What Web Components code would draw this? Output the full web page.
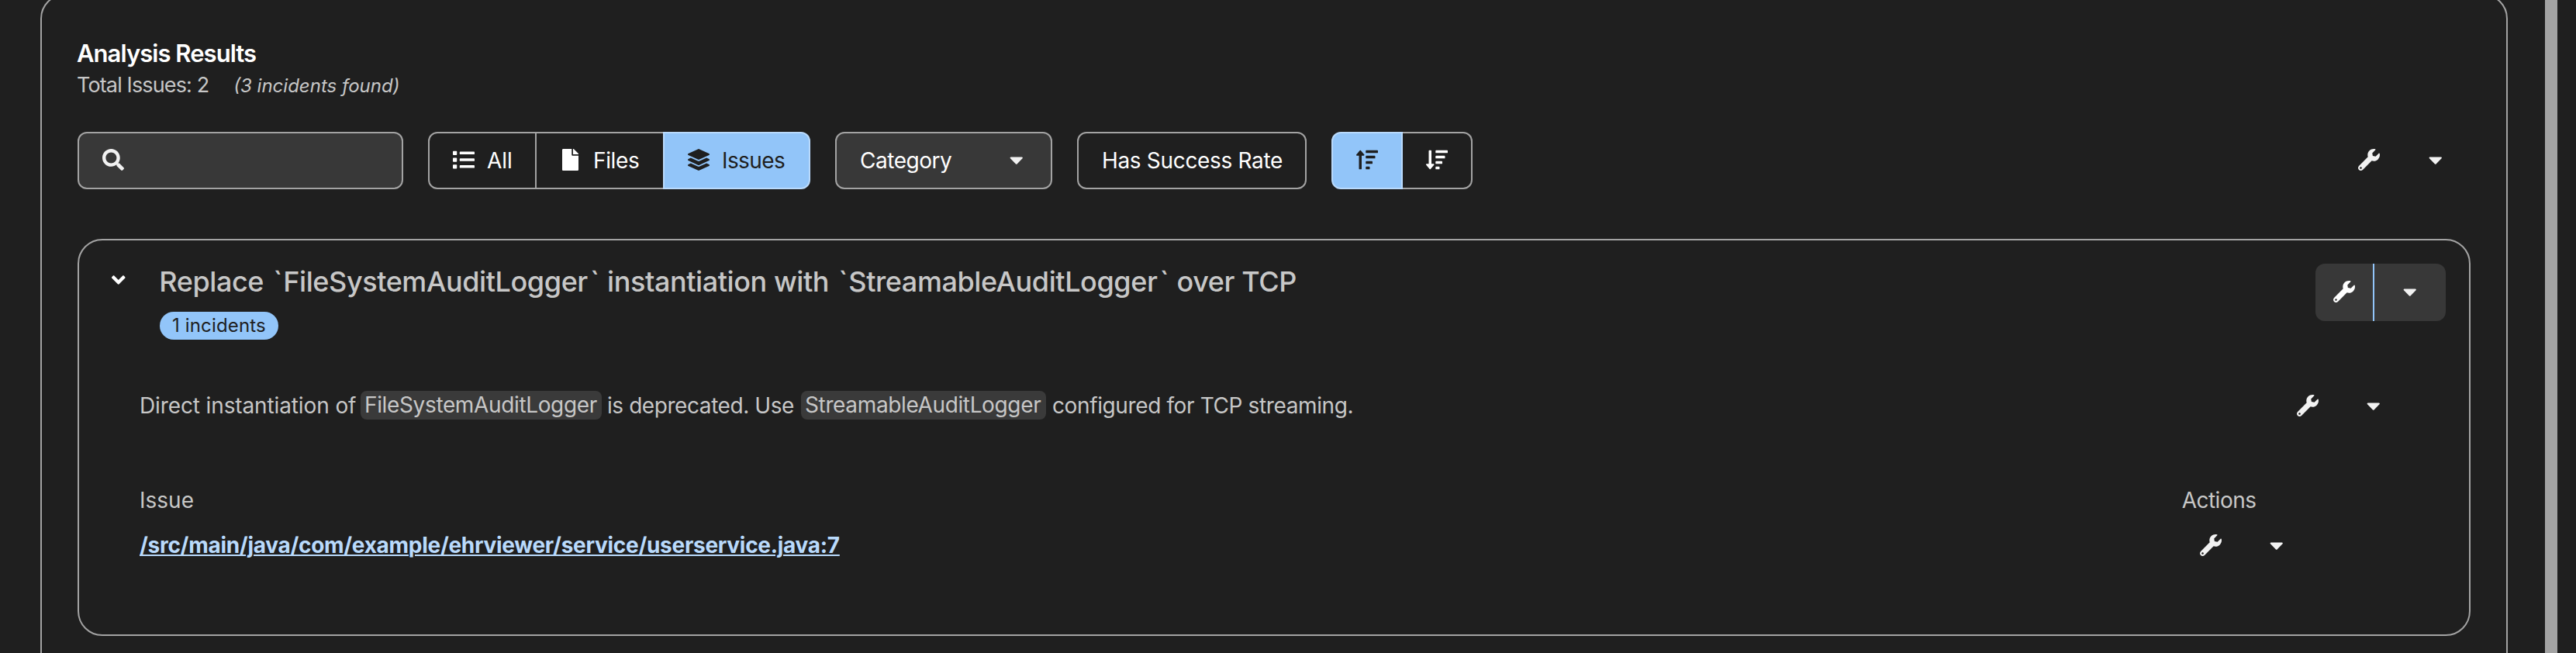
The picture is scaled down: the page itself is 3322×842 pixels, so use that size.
<!DOCTYPE html>
<html lang="en">
<head>
<meta charset="utf-8">
<title>Analysis Results</title>
<style>
body { margin: 0; background: #1f1f1f; color: #c7c7c7; font-family: Inter, "Liberation Sans", sans-serif; }
</style>
</head>
<body>
<analysis-page></analysis-page>
<script>
const ICONS = {
  search: [512, 'M505 442.7L405.3 343c-4.5-4.5-10.6-7-17-7H372c27.6-35.3 44-79.7 44-128C416 93.1 322.9 0 208 0S0 93.1 0 208s93.1 208 208 208c48.3 0 92.7-16.4 128-44v16.3c0 6.4 2.5 12.5 7 17l99.7 99.7c9.4 9.4 24.6 9.4 33.9 0l28.3-28.3c9.4-9.4 9.4-24.6.1-34zM208 336c-70.7 0-128-57.2-128-128 0-70.7 57.2-128 128-128 70.7 0 128 57.2 128 128 0 70.7-57.2 128-128 128z'],
  list: [512, 'M80 368H16a16 16 0 0 0-16 16v64a16 16 0 0 0 16 16h64a16 16 0 0 0 16-16v-64a16 16 0 0 0-16-16zm0-320H16A16 16 0 0 0 0 64v64a16 16 0 0 0 16 16h64a16 16 0 0 0 16-16V64a16 16 0 0 0-16-16zm0 160H16a16 16 0 0 0-16 16v64a16 16 0 0 0 16 16h64a16 16 0 0 0 16-16v-64a16 16 0 0 0-16-16zm416 176H176a16 16 0 0 0-16 16v32a16 16 0 0 0 16 16h320a16 16 0 0 0 16-16v-32a16 16 0 0 0-16-16zm0-320H176a16 16 0 0 0-16 16v32a16 16 0 0 0 16 16h320a16 16 0 0 0 16-16V80a16 16 0 0 0-16-16zm0 160H176a16 16 0 0 0-16 16v32a16 16 0 0 0 16 16h320a16 16 0 0 0 16-16v-32a16 16 0 0 0-16-16z'],
  file: [384, 'M224 136V0H24C10.7 0 0 10.7 0 24v464c0 13.3 10.7 24 24 24h336c13.3 0 24-10.7 24-24V160H248c-13.2 0-24-10.8-24-24zm160-14.1v6.1H256V0h6.1c6.4 0 12.5 2.5 17 7l97.9 98c4.5 4.5 7 10.6 7 16.9z'],
  layers: [512, 'M12.41 148.02l232.94 105.67c6.8 3.09 14.49 3.09 21.29 0l232.94-105.67c16.55-7.51 16.55-32.52 0-40.03L266.65 2.31a25.607 25.607 0 0 0-21.29 0L12.41 107.98c-16.55 7.51-16.55 32.53 0 40.04zm487.18 88.28l-58.09-26.33-161.64 73.27c-7.56 3.43-15.59 5.17-23.86 5.17s-16.29-1.74-23.86-5.17L70.51 209.97l-58.1 26.33c-16.55 7.5-16.55 32.5 0 40l232.94 105.59c6.8 3.08 14.49 3.08 21.29 0L499.59 276.3c16.55-7.5 16.55-32.5 0-40zm0 127.8l-57.87-26.23-161.86 73.37c-7.56 3.43-15.59 5.17-23.86 5.17s-16.29-1.74-23.86-5.17L70.29 337.87 12.41 364.1c-16.55 7.5-16.55 32.5 0 40l232.94 105.59c6.8 3.08 14.49 3.08 21.29 0L499.59 404.1c16.55-7.5 16.55-32.5 0-40z'],
  wrench: [512, 'M507.73 109.1c-2.24-9.03-13.54-12.09-20.12-5.51l-74.36 74.36-67.88-11.31-11.31-67.88 74.36-74.36c6.62-6.62 3.43-17.9-5.66-20.16-47.38-11.74-99.55.91-136.58 37.93-39.64 39.64-50.55 97.1-34.05 147.2L18.74 402.76c-24.99 24.99-24.99 65.51 0 90.5 24.99 24.99 65.51 24.99 90.5 0l213.21-213.21c50.12 16.71 107.47 5.68 147.37-34.22 37.07-37.07 49.7-89.32 37.91-136.73zM64 472c-13.25 0-24-10.75-24-24 0-13.26 10.75-24 24-24s24 10.74 24 24c0 13.25-10.75 24-24 24z'],
  caret: [320, 'M31.3 192h257.3c17.8 0 26.7 21.5 14.1 34.1L174.1 354.8c-7.8 7.8-20.5 7.8-28.3 0L17.2 226.1C4.6 213.5 13.5 192 31.3 192z'],
  angle: [320, 'M143 352.3L7 216.3c-9.4-9.4-9.4-24.6 0-33.9l22.6-22.6c9.4-9.4 24.6-9.4 33.9 0l96.4 96.4 96.4-96.4c9.4-9.4 24.6-9.4 33.9 0l22.6 22.6c9.4 9.4 9.4 24.6 0 33.9l-136 136c-9.2 9.4-24.4 9.4-33.8 0z'],
  bars: 'M304 416h-64a16 16 0 0 0-16 16v32a16 16 0 0 0 16 16h64a16 16 0 0 0 16-16v-32a16 16 0 0 0-16-16zM432 160H240a16 16 0 0 0-16 16v32a16 16 0 0 0 16 16h192a16 16 0 0 0 16-16v-32a16 16 0 0 0-16-16zm-64 128H240a16 16 0 0 0-16 16v32a16 16 0 0 0 16 16h128a16 16 0 0 0 16-16v-32a16 16 0 0 0-16-16zM496 32H240a16 16 0 0 0-16 16v32a16 16 0 0 0 16 16h256a16 16 0 0 0 16-16V48a16 16 0 0 0-16-16z'
};
ICONS.sortUp = [512, ICONS.bars + 'M16 160h48v304a16 16 0 0 0 16 16h32a16 16 0 0 0 16-16V160h48c14.21 0 21.38-17.24 11.31-27.31l-80-96a16 16 0 0 0-22.62 0l-80 96C-5.35 142.74 1.78 160 16 160z'];
ICONS.sortDown = [512, ICONS.bars + 'M176 352h-48V48a16 16 0 0 0-16-16H80a16 16 0 0 0-16 16v304H16c-14.19 0-21.37 17.24-11.29 27.31l80 96a16 16 0 0 0 22.62 0l80-96C197.35 369.26 190.22 352 176 352z'];

function define(name, html) {
  customElements.define(name, class extends HTMLElement {
    connectedCallback() {
      if (this.shadowRoot) return;
      this.attachShadow({ mode: 'open' }).innerHTML = typeof html === 'function' ? html(this) : html;
    }
  });
}

define('ui-icon', el => {
  const [w, d] = ICONS[el.getAttribute('name')];
  return `<style>:host{display:block;flex:none;height:28px;white-space:normal}svg{display:block}</style>
  <svg width="${w * 28 / 512}" height="28" viewBox="0 0 ${w} 512" fill="currentColor"><path d="${d}"/></svg>`;
});

define('search-box', `<style>
:host{display:flex;box-sizing:border-box;width:420px;height:74px;padding:20px 30px;border:2px solid #a3a3a3;border-radius:12px;background:#383838;color:#f2f2f2}
</style><ui-icon name="search"></ui-icon>`);

define('toggle-item', `<style>
:host{display:flex;box-sizing:border-box;height:74px;padding:20px 0 0 30px;border:2px solid #a3a3a3;color:#fff;font-size:28px;line-height:30px;white-space:nowrap}
:host([joined]){border-left-width:0;padding-left:32px}
:host([first]){border-radius:12px 0 0 12px}
:host([last]){border-radius:0 12px 12px 0}
:host([first][last]){border-radius:12px}
:host([open]){border-right-width:0}
:host([selected]){background:#92c5f9;border-color:#b9dafc;color:#1f1f1f}
</style><slot name="icon"></slot><slot></slot>`);

define('category-select', `<style>
:host{display:flex;justify-content:space-between;box-sizing:border-box;width:280px;height:74px;padding:20px 35.5px 0 30px;border:2px solid #a3a3a3;border-radius:12px;background:#383838;color:#fff;font-size:28px;line-height:30px}
ui-icon{color:#f2f2f2;margin-top:-.5px}
</style><span style="letter-spacing:-.47px"><slot></slot></span><ui-icon name="caret"></ui-icon>`);

define('fix-actions', `<style>
:host{display:flex;flex:none;height:28px;gap:62.3px;color:#f2f2f2;white-space:normal}
:host([boxed]){box-sizing:border-box;width:168px;height:74px;gap:0;border-radius:12px;background:#383838;overflow:hidden}
.c{margin-top:-.5px}
:host([boxed]) .w{box-sizing:border-box;width:76px;height:74px;padding:22px 0 0 23px;border-right:2px solid #92c5f9;color:#fff}
:host([boxed]) .c{padding:22px 0 0 37.3px}
</style><div class="w"><ui-icon name="wrench"></ui-icon></div><div class="c"><ui-icon name="caret"></ui-icon></div>`);

define('results-header', `<style>
:host{display:block;margin-left:-1px}
h2{margin:0;color:#fff;font-size:31px;font-weight:600;line-height:40px;letter-spacing:-.95px}
.sub{display:flex;align-items:baseline;gap:32px;line-height:42px;height:42px}
.total{font-size:27px;letter-spacing:-.87px}
.found{font-size:24px;font-style:italic}
</style><h2>Analysis Results</h2>
<div class="sub"><span class="total">Total Issues: 2</span><span class="found">(3 incidents found)</span></div>`);

define('results-toolbar', `<style>
:host{display:flex;height:74px}
.group{display:flex}
</style>
<search-box></search-box>
<div class="group" style="margin-left:32px">
<toggle-item first style="width:140px"><ui-icon slot="icon" name="list"></ui-icon><span style="margin-left:16px">All</span></toggle-item>
<toggle-item joined open style="width:163px"><ui-icon slot="icon" name="file" style="margin-left:1px"></ui-icon><span style="margin-left:19px;letter-spacing:-.35px">Files</span></toggle-item>
<toggle-item last selected style="width:190px"><ui-icon slot="icon" name="layers"></ui-icon><span style="margin-left:16px;letter-spacing:-.6px">Issues</span></toggle-item>
</div>
<category-select style="margin-left:32px">Category</category-select>
<toggle-item first last style="width:296px;margin-left:32px"><span style="margin-left:0;letter-spacing:-.33px">Has Success Rate</span></toggle-item>
<div class="group" style="margin-left:32px">
<toggle-item first selected style="width:92px"><ui-icon slot="icon" name="sortUp"></ui-icon></toggle-item>
<toggle-item last joined style="width:90px;padding-left:30px"><ui-icon slot="icon" name="sortDown"></ui-icon></toggle-item>
</div>
<fix-actions style="margin:22px 37px 0 auto"></fix-actions>`);

define('incident-badge', `<style>
:host{display:block;box-sizing:border-box;width:153px;height:36px;padding-left:16px;border-radius:18px;background:#92c5f9;color:#1f1f1f;font-size:24px;line-height:36px;letter-spacing:.15px;white-space:nowrap}
</style><slot></slot>`);

define('code-chip', `<style>
:host{display:block;flex:none;box-sizing:border-box;height:37px;margin-top:2px;padding-left:5px;border-radius:8px;background:#3a3a3a;line-height:37px;letter-spacing:-.36px}
</style><slot></slot>`);

define('issue-card', `<style>
:host{display:block;box-sizing:border-box;height:512px;padding:30px 30px 0 36px;border:2px solid #a3a3a3;border-radius:32px}
header{display:flex;height:162px}
.toggle{flex:none;width:61px;margin:7px 0 0 6.3px;color:#fff}
.title{flex:1}
h3{margin:0;font-size:36px;font-weight:500;line-height:46px;letter-spacing:-.42px;white-space:nowrap}
h3 i{font-style:normal;margin:0 1.3px 0 3px}
incident-badge{margin:16px 0 0 .7px}
.body{padding-left:42px;font-size:28px;line-height:42px;white-space:pre}
.desc,.cols,.row{display:flex;height:42px}
.desc span{flex:none}
.cols{margin-top:80px}
.row{margin-top:16px}
a{color:#b9dafc;font-weight:700;letter-spacing:-.29px;text-decoration:underline;text-decoration-thickness:2px;text-underline-offset:2px}
</style>
<header>
<div class="toggle"><ui-icon name="angle"></ui-icon></div>
<div class="title"><h3>Replace <i>\`</i>FileSystemAuditLogger<i>\`</i> instantiation with <i>\`</i>StreamableAuditLogger<i>\`</i> over TCP</h3><incident-badge>1 incidents</incident-badge></div>
<fix-actions boxed></fix-actions>
</header>
<div class="body">
<div class="desc"><span style="width:285px;letter-spacing:-.12px">Direct instantiation of </span><code-chip style="width:311px">FileSystemAuditLogger</code-chip><span style="width:250px;margin-left:7px;letter-spacing:-.43px">is deprecated. Use </span><code-chip style="width:316px">StreamableAuditLogger</code-chip><span style="margin-left:8px;letter-spacing:-.38px">configured for TCP streaming.</span><fix-actions style="margin:7px 84.5px 0 auto"></fix-actions></div>
<div class="cols"><span>Issue</span><span style="margin:0 244.5px 0 auto;letter-spacing:-.5px">Actions</span></div>
<div class="row"><a>/src/main/java/com/example/ehrviewer/service/userservice.java:7</a><fix-actions style="margin:7px 209.5px 0 auto"></fix-actions></div>
</div>`.replace(/>\n</g, '><'));

define('analysis-page', `<style>
:host{display:flex;height:842px;overflow:hidden;background:#1f1f1f}
main{box-sizing:border-box;flex:none;width:3182px;height:900px;margin:-8px 0 0 52px;padding:55px 46px 0;border:2px solid #a3a3a3;border-radius:32px}
results-toolbar{margin-top:39px}
issue-card{margin-top:64px}
.scrollbar{flex:none;width:16px;margin-left:48px;background:#a3a3a3}
</style>
<main><results-header></results-header><results-toolbar></results-toolbar><issue-card></issue-card></main>
<div class="scrollbar"></div>`);
</script>
</body>
</html>
